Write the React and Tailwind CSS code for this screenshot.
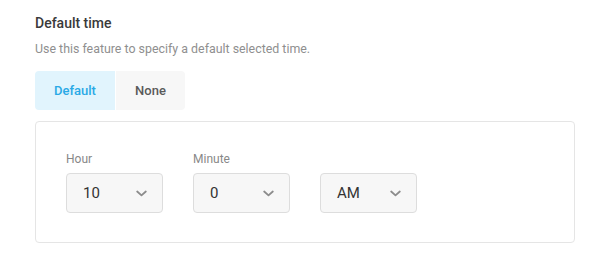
import React from "react";

function Chevron() {
  return (
    <svg width="11" height="7" viewBox="0 0 11 7" fill="none" className="shrink-0">
      <path d="M1.2 1.5l4.3 3.8 4.3-3.8" stroke="#8c8c8c" strokeWidth="1.8" strokeLinecap="round" strokeLinejoin="round" />
    </svg>
  );
}

function Select({ value }) {
  return (
    <div className="w-[97px] h-[40px] flex items-center justify-between pl-[16px] pr-[15px] bg-[#f7f7f7] border border-[#dddddd] rounded-[4px] text-[15px] text-[#333333]">
      <span>{value}</span>
      <Chevron />
    </div>
  );
}

export default function App() {
  return (
    <div className="w-[610px] h-[263px] bg-white pl-[35px] pr-[35px] pt-[13px] font-['Roboto',sans-serif]">
      <div className="text-[14px] font-medium text-[#3a3a3a] leading-[20px]">Default time</div>
      <div className="mt-[7px] text-[12.4px] text-[#8f8f8f] leading-[18px]">Use this feature to specify a default selected time.</div>
      <div className="mt-[13px] flex w-fit rounded-[4px] overflow-hidden text-[13px] font-medium">
        <div className="w-[80px] h-[39px] flex items-center justify-center bg-[#e1f4fd] text-[#29a9e6]">Default</div>
        <div className="w-[70px] h-[39px] flex items-center justify-center bg-[#f7f7f7] text-[#5a5a5a] border-l border-white">None</div>
      </div>
      <div className="mt-[11px] h-[122px] border border-[#e5e5e5] rounded-[4px] pl-[30px] pt-[29px]">
        <div className="flex gap-[30px]">
          <div className="flex flex-col">
            <div className="text-[12px] text-[#888888] leading-[16px] h-[16px]">Hour</div>
            <div className="mt-[6px]"><Select value="10" /></div>
          </div>
          <div className="flex flex-col">
            <div className="text-[12px] text-[#888888] leading-[16px] h-[16px]">Minute</div>
            <div className="mt-[6px]"><Select value="0" /></div>
          </div>
          <div className="flex flex-col">
            <div className="h-[16px]"></div>
            <div className="mt-[6px]"><Select value="AM" /></div>
          </div>
        </div>
      </div>
    </div>
  );
}
